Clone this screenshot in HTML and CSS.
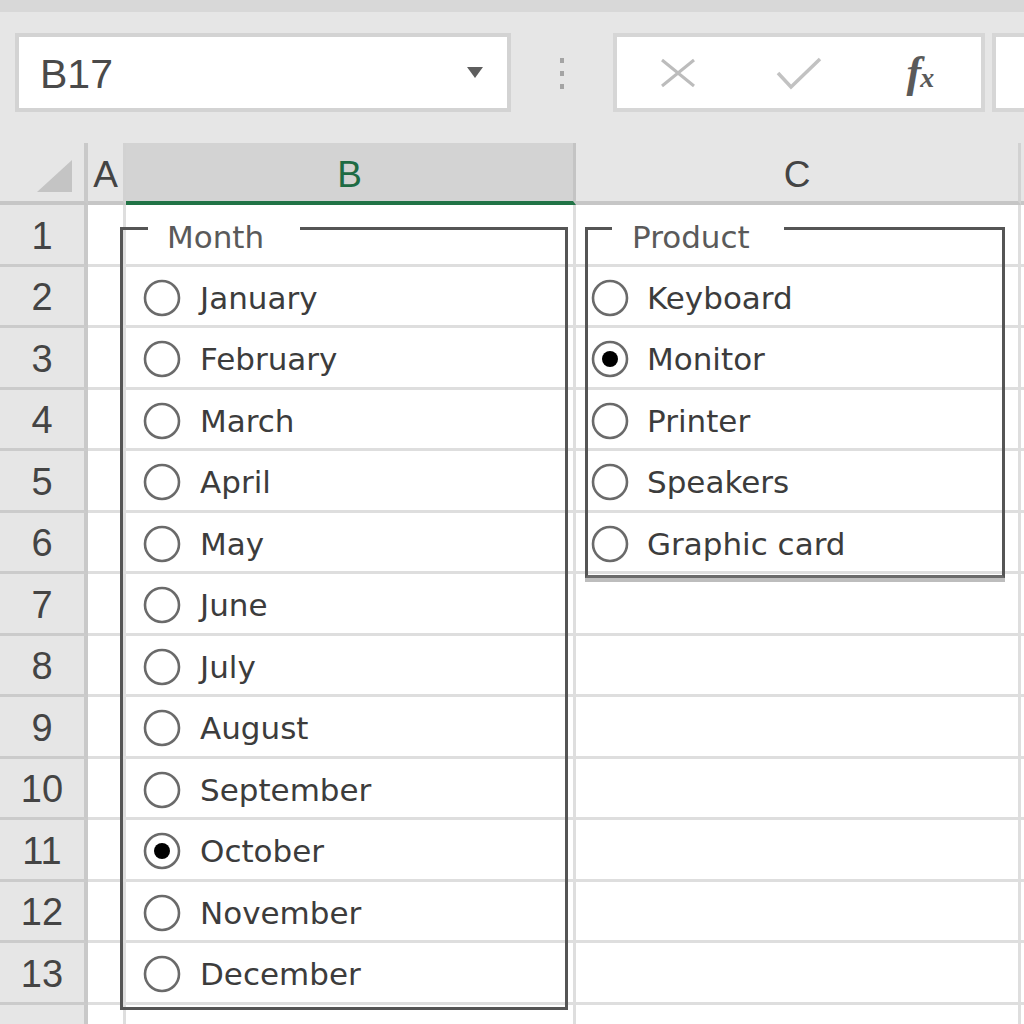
FILE: index.html
```html
<!DOCTYPE html>
<html>
<head>
<meta charset="utf-8">
<link rel="stylesheet" href="styles.css">
</head>
<body>
<div class="topstrip"></div>
<div class="toolbar">
  <div class="namebox"><span class="cellref">B17</span><span class="dd"></span></div>
  <div class="grip"><i></i><i></i><i></i></div>
  <div class="fbtns">
    <span class="ico"><svg width="38" height="30" viewBox="0 0 38 30"><path d="M3 2 L35 28 M35 2 L3 28" stroke="#bcbcbc" stroke-width="3" fill="none"/></svg></span>
    <span class="ico"><svg width="46" height="34" viewBox="0 0 46 34"><path d="M2 17 L15 31 L44 3" stroke="#c2c2c2" stroke-width="3.5" fill="none"/></svg></span>
    <span class="ico fx"><span class="f">f</span><span class="x">x</span></span>
  </div>
  <div class="finput"></div>
</div>
<div class="sheet">
  <div class="row hdr">
    <div class="corner"><svg width="35" height="32" viewBox="0 0 35 32"><polygon points="35,0 35,32 0,32" fill="#c4c4c4"/></svg></div>
    <div class="ch">A</div>
    <div class="ch sel">B</div>
    <div class="ch">C</div>
    <div class="ch last"></div>
  </div>
  <div class="row"><div class="rh">1</div><div class="c"></div><div class="c"></div><div class="c"></div><div class="c last"></div></div>
  <div class="row"><div class="rh">2</div><div class="c"></div><div class="c"></div><div class="c"></div><div class="c last"></div></div>
  <div class="row"><div class="rh">3</div><div class="c"></div><div class="c"></div><div class="c"></div><div class="c last"></div></div>
  <div class="row"><div class="rh">4</div><div class="c"></div><div class="c"></div><div class="c"></div><div class="c last"></div></div>
  <div class="row"><div class="rh">5</div><div class="c"></div><div class="c"></div><div class="c"></div><div class="c last"></div></div>
  <div class="row"><div class="rh">6</div><div class="c"></div><div class="c"></div><div class="c"></div><div class="c last"></div></div>
  <div class="row"><div class="rh">7</div><div class="c"></div><div class="c"></div><div class="c"></div><div class="c last"></div></div>
  <div class="row"><div class="rh">8</div><div class="c"></div><div class="c"></div><div class="c"></div><div class="c last"></div></div>
  <div class="row"><div class="rh">9</div><div class="c"></div><div class="c"></div><div class="c"></div><div class="c last"></div></div>
  <div class="row"><div class="rh">10</div><div class="c"></div><div class="c"></div><div class="c"></div><div class="c last"></div></div>
  <div class="row"><div class="rh">11</div><div class="c"></div><div class="c"></div><div class="c"></div><div class="c last"></div></div>
  <div class="row"><div class="rh">12</div><div class="c"></div><div class="c"></div><div class="c"></div><div class="c last"></div></div>
  <div class="row"><div class="rh">13</div><div class="c"></div><div class="c"></div><div class="c"></div><div class="c last"></div></div>
  <div class="row"><div class="rh"></div><div class="c"></div><div class="c"></div><div class="c"></div><div class="c last"></div></div>

  <div class="group month">
    <div class="legend">Month</div>
    <div class="opt"><svg class="radio" viewBox="0 0 40 40"><circle cx="20" cy="20" r="17" /></svg><span>January</span></div>
    <div class="opt"><svg class="radio" viewBox="0 0 40 40"><circle cx="20" cy="20" r="17" /></svg><span>February</span></div>
    <div class="opt"><svg class="radio" viewBox="0 0 40 40"><circle cx="20" cy="20" r="17" /></svg><span>March</span></div>
    <div class="opt"><svg class="radio" viewBox="0 0 40 40"><circle cx="20" cy="20" r="17" /></svg><span>April</span></div>
    <div class="opt"><svg class="radio" viewBox="0 0 40 40"><circle cx="20" cy="20" r="17" /></svg><span>May</span></div>
    <div class="opt"><svg class="radio" viewBox="0 0 40 40"><circle cx="20" cy="20" r="17" /></svg><span>June</span></div>
    <div class="opt"><svg class="radio" viewBox="0 0 40 40"><circle cx="20" cy="20" r="17" /></svg><span>July</span></div>
    <div class="opt"><svg class="radio" viewBox="0 0 40 40"><circle cx="20" cy="20" r="17" /></svg><span>August</span></div>
    <div class="opt"><svg class="radio" viewBox="0 0 40 40"><circle cx="20" cy="20" r="17" /></svg><span>September</span></div>
    <div class="opt"><svg class="radio" viewBox="0 0 40 40"><circle cx="20" cy="20" r="17" /><circle class="dot" cx="20" cy="20" r="8" /></svg><span>October</span></div>
    <div class="opt"><svg class="radio" viewBox="0 0 40 40"><circle cx="20" cy="20" r="17" /></svg><span>November</span></div>
    <div class="opt"><svg class="radio" viewBox="0 0 40 40"><circle cx="20" cy="20" r="17" /></svg><span>December</span></div>
  </div>

  <div class="group product">
    <div class="legend">Product</div>
    <div class="opt"><svg class="radio" viewBox="0 0 40 40"><circle cx="20" cy="20" r="17" /></svg><span>Keyboard</span></div>
    <div class="opt"><svg class="radio" viewBox="0 0 40 40"><circle cx="20" cy="20" r="17" /><circle class="dot" cx="20" cy="20" r="8" /></svg><span>Monitor</span></div>
    <div class="opt"><svg class="radio" viewBox="0 0 40 40"><circle cx="20" cy="20" r="17" /></svg><span>Printer</span></div>
    <div class="opt"><svg class="radio" viewBox="0 0 40 40"><circle cx="20" cy="20" r="17" /></svg><span>Speakers</span></div>
    <div class="opt"><svg class="radio" viewBox="0 0 40 40"><circle cx="20" cy="20" r="17" /></svg><span>Graphic card</span></div>
  </div>
</div>
</body>
</html>
```

FILE: styles.css
```css
html, body {
  margin: 0;
  padding: 0;
}
body {
  width: 1024px;
  height: 1024px;
  overflow: hidden;
  background: #e6e6e6;
  font-family: "Liberation Sans", Arial, sans-serif;
}

.topstrip {
  height: 12px;
  background: #d8d8d8;
}

.toolbar {
  height: 131px;
  box-sizing: border-box;
  padding: 21px 0 0 15px;
  display: flex;
  align-items: flex-start;
}

.namebox {
  width: 496px;
  height: 79px;
  box-sizing: border-box;
  border: 4px solid #d3d3d3;
  background: #fff;
  display: flex;
  align-items: center;
  padding: 3px 24px 0 21px;
}
.cellref {
  font-size: 41px;
  color: #4a4a4a;
}
.dd {
  margin-left: auto;
  margin-top: -3px;
  width: 0;
  height: 0;
  border-left: 8px solid transparent;
  border-right: 8px solid transparent;
  border-top: 11px solid #5e5e5e;
}

.grip {
  margin-left: 49px;
  padding-top: 25px;
  display: flex;
  flex-direction: column;
  gap: 8px;
}
.grip i {
  display: block;
  width: 4px;
  height: 5px;
  background: #a4a4a4;
}

.fbtns {
  margin-left: 49px;
  width: 372px;
  height: 79px;
  box-sizing: border-box;
  border: 4px solid #d6d6d6;
  background: #fff;
  display: grid;
  grid-template-columns: repeat(3, 1fr);
  align-items: center;
  justify-items: center;
}
.ico {
  display: flex;
  align-items: center;
  justify-content: center;
}
.fx {
  font-family: "Liberation Serif", "Times New Roman", serif;
  font-style: italic;
  font-weight: bold;
  color: #5a5a5a;
  align-items: baseline;
}
.fx .f {
  font-size: 44px;
}
.fx .x {
  font-size: 28px;
  margin-left: -1px;
}

.finput {
  margin-left: 7px;
  flex: 1;
  height: 79px;
  box-sizing: border-box;
  border: 4px solid #d6d6d6;
  border-right: 0;
  background: #fff;
}

/* sheet */
.sheet {
  position: relative;
  background: #fff;
}
.row {
  display: grid;
  grid-template-columns: 88px 38px 450px 445px 1fr;
  height: 61.5px;
}
.row > div {
  box-sizing: border-box;
}
.c {
  border-right: 3px solid #dedede;
  border-bottom: 3px solid #dedede;
}
.c.last {
  border-right: 0;
}
.rh {
  background: #e6e6e6;
  border-right: 4px solid #c9c9c9;
  border-bottom: 3px solid #cbcbcb;
  display: flex;
  align-items: center;
  justify-content: center;
  padding-top: 4px;
  font-size: 38px;
  color: #444;
}

.hdr {
  height: 62px;
}
.corner {
  background: #e6e6e6;
  border-right: 4px solid #c9c9c9;
  border-bottom: 4px solid #c6c6c6;
  display: flex;
  align-items: flex-end;
  justify-content: flex-end;
  padding: 0 12px 9px 0;
}
.ch {
  background: #e6e6e6;
  border-right: 3px solid #d2d2d2;
  border-bottom: 4px solid #c6c6c6;
  display: flex;
  align-items: center;
  justify-content: center;
  padding-top: 5px;
  font-size: 37px;
  color: #444;
}
.ch.sel {
  background: #d3d3d3;
  border-right-color: #c4c4c4;
  border-bottom-color: #217346;
  color: #1e6b44;
}
.ch.last {
  border-right: 0;
}

/* group boxes (form controls floating over the sheet) */
.group {
  position: absolute;
  top: 84px;
  box-sizing: border-box;
  border: 3px solid #555;
  padding-top: 37px;
  font-family: "DejaVu Sans", Verdana, sans-serif;
}
.group.month {
  left: 120px;
  width: 448px;
  height: 783px;
  padding-left: 19px;
}
.group.product {
  left: 585px;
  width: 420px;
  height: 351px;
  padding-left: 2px;
  border-bottom-color: #6a6a6a;
  box-shadow: 0 4px 0 #bdbdbd;
}
.legend {
  position: absolute;
  top: -11px;
  background: #fff;
  font-size: 31px;
  line-height: 36px;
  color: #5a5a5a;
}
.month .legend {
  left: 25px;
  padding: 0 36px 0 19px;
}
.product .legend {
  left: 24px;
  padding: 0 34px 0 20px;
}

.opt {
  height: 61.5px;
  display: flex;
  align-items: center;
  gap: 18px;
  font-size: 31px;
  color: #3c3c3c;
}
.product .opt {
  gap: 17px;
}
.radio {
  width: 40px;
  height: 40px;
  flex: none;
}
.radio circle {
  fill: #fff;
  stroke: #6a6a6a;
  stroke-width: 2.6;
}
.radio circle.dot {
  fill: #000;
  stroke: none;
}
```
